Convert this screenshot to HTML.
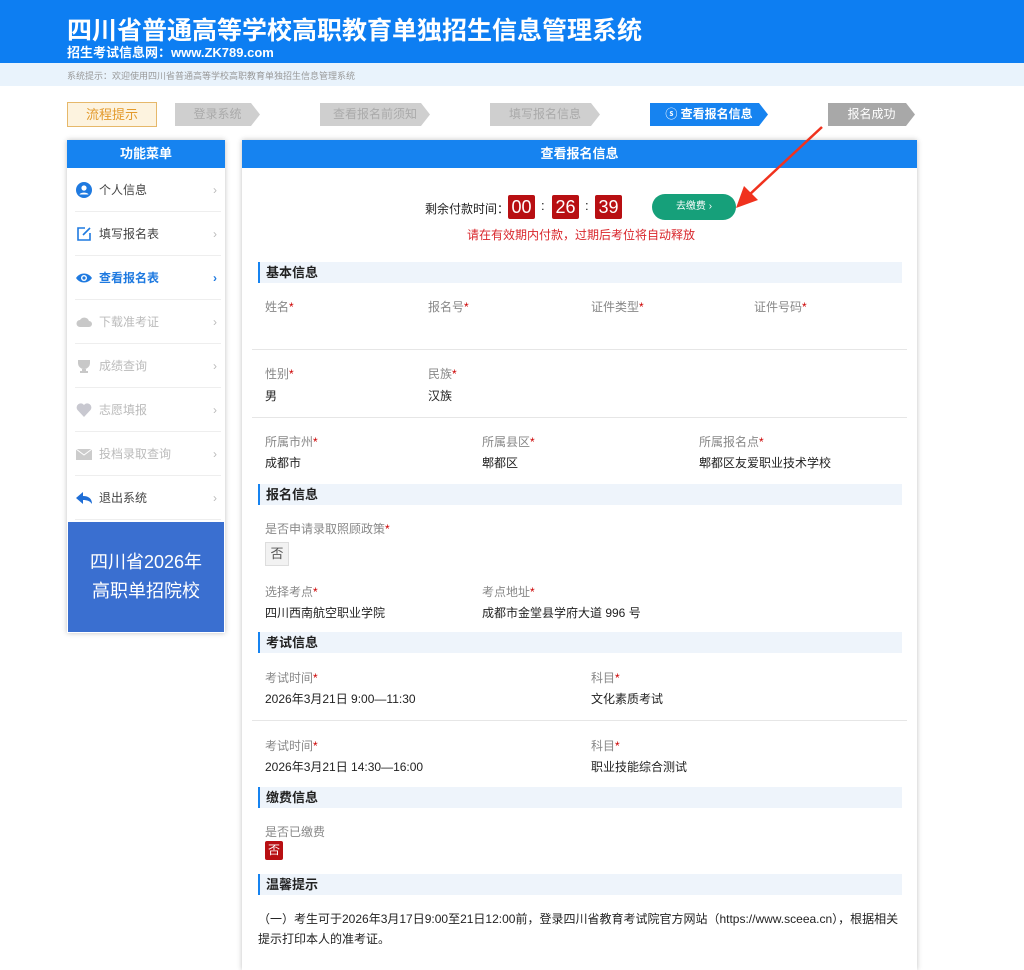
<!DOCTYPE html>
<html><head><meta charset="utf-8"><style>
*{margin:0;padding:0;box-sizing:border-box}
body{width:1024px;height:960px;overflow:hidden;background:#fff;font-family:"Liberation Sans","Noto Sans CJK SC",sans-serif;color:#222;position:relative}
.a{position:absolute;white-space:nowrap}
.hdr{left:0;top:0;width:1024px;height:63px;background:#0d7ef2}
.band{left:0;top:63px;width:1024px;height:23px;background:#e9f3fc}
.step{height:23px;top:103px;font-size:12px;color:#aaa;line-height:23px;text-align:center;background:#cfcfcf;clip-path:polygon(0 0,calc(100% - 9px) 0,100% 50%,calc(100% - 9px) 100%,0 100%)}
.side{left:67px;top:140px;width:158px;height:493px;background:#fff;box-shadow:0 0 5px rgba(0,0,0,.25)}
.item{position:absolute;left:8px;width:146px;height:44px;border-bottom:1px solid #eee;font-size:12px;line-height:44px;padding-left:24px;color:#444}
.item .ic{position:absolute;left:1px;top:14px;width:16px;height:16px}
.item .ar{position:absolute;right:4px;top:0;color:#bbb;font-size:12px}
.main{left:242px;top:140px;width:675px;height:830px;background:#fff;box-shadow:0 0 5px rgba(0,0,0,.25)}
.bh{height:28px;background:#1683f0;color:#fff;font-weight:bold;font-size:13px;text-align:center;line-height:28px}
.sec{left:16px;width:644px;height:21px;background:#eef4fb;border-left:2px solid #1683f0;font-size:13px;font-weight:bold;line-height:21px;padding-left:6px}
.lb{font-size:12px;color:#888}
.lb i{color:#c00;font-style:normal}
.v{font-size:12px;color:#222}
.sep{left:10px;width:655px;height:1px;background:#e6e6e6}
.tm{width:27px;height:24px;background:#b80f12;color:#fff;font-size:18px;line-height:24px;text-align:center;border-radius:2px}
</style></head><body>
<div class="a hdr"></div>
<div class="a" style="left:67px;top:11px;font-size:25px;font-weight:bold;color:#fff">四川省普通高等学校高职教育单独招生信息管理系统</div>
<div class="a" style="left:67px;top:42px;font-size:13px;font-weight:bold;color:#fff">招生考试信息网：www.ZK789.com</div>
<div class="a band"></div>
<div class="a" style="left:67px;top:69px;font-size:9px;color:#999">系统提示：欢迎使用四川省普通高等学校高职教育单独招生信息管理系统</div>

<div class="a" style="left:67px;top:102px;width:90px;height:25px;background:#fdf3df;border:1px solid #e6b86a;color:#e39a2c;font-size:13px;line-height:23px;text-align:center">流程提示</div>
<div class="a step" style="left:175px;width:85px">登录系统</div>
<div class="a step" style="left:320px;width:110px">查看报名前须知</div>
<div class="a step" style="left:490px;width:110px">填写报名信息</div>
<div class="a step" style="left:650px;width:118px;background:#1683f0;color:#fff;font-weight:bold">ⓢ 查看报名信息</div>
<div class="a step" style="left:828px;width:87px;background:#a8a8a8;color:#fff">报名成功</div>

<div class="a side">
<div class="bh" style="background:#1683f0">功能菜单</div>
<div class="item" style="top:28px"><svg class="ic" viewBox="0 0 16 16"><circle cx="8" cy="8" r="8" fill="#1f7ae0"/><circle cx="8" cy="6" r="2.6" fill="#fff"/><path d="M3.5 12.5c1-2.5 8-2.5 9 0" fill="#fff"/></svg>个人信息<span class="ar">›</span></div>
<div class="item" style="top:72px"><svg class="ic" viewBox="0 0 16 16"><path d="M9 2H2v12h12V7" fill="none" stroke="#1f7ae0" stroke-width="1.6"/><path d="M7 9l7-7" stroke="#1f7ae0" stroke-width="1.6"/></svg>填写报名表<span class="ar">›</span></div>
<div class="item" style="top:116px;color:#1f7ae0;font-weight:bold"><svg class="ic" viewBox="0 0 16 16"><path d="M0 8c4-6 12-6 16 0c-4 6-12 6-16 0z" fill="#1f7ae0"/><circle cx="8" cy="8" r="3" fill="#fff"/><circle cx="8" cy="8" r="1.6" fill="#1f7ae0"/></svg>查看报名表<span class="ar" style="color:#1f7ae0">›</span></div>
<div class="item" style="top:160px;color:#bbb"><svg class="ic" viewBox="0 0 16 16"><path d="M4 13a3.5 3.5 0 010-7a5 5 0 019 1a3 3 0 010 6z" fill="#c8c8c8"/></svg>下载准考证<span class="ar">›</span></div>
<div class="item" style="top:204px;color:#bbb"><svg class="ic" viewBox="0 0 16 16"><path d="M2 2h12v3a6 6 0 01-12 0z M6 11h4v2h2v2H4v-2h2z" fill="#c8c8c8"/></svg>成绩查询<span class="ar">›</span></div>
<div class="item" style="top:248px;color:#bbb"><svg class="ic" viewBox="0 0 16 16"><path d="M8 15L1.5 8A3.8 3.8 0 018 3a3.8 3.8 0 016.5 5z" fill="#c8c8d0"/></svg>志愿填报<span class="ar">›</span></div>
<div class="item" style="top:292px;color:#bbb"><svg class="ic" viewBox="0 0 16 16"><rect x="0" y="3" width="16" height="11" fill="#ccc"/><path d="M0 3l8 6 8-6" stroke="#fff" fill="none"/></svg>投档录取查询<span class="ar">›</span></div>
<div class="item" style="top:336px"><svg class="ic" viewBox="0 0 16 16"><path d="M7 2L0 8l7 6V10c4 0 7 1 9 4c0-5-3-8-9-8z" fill="#1f6ed6"/></svg>退出系统<span class="ar">›</span></div>
<div style="position:absolute;left:1px;top:382px;width:156px;height:110px;background:#3a6fd0;color:#fff;font-size:18px;text-align:center;line-height:29px;padding-top:26px">四川省2026年<br>高职单招院校</div>
</div>

<div class="a main">
<div class="bh">查看报名信息</div>
<div class="a" style="left:183px;top:60px;font-size:12px">剩余付款时间：</div>
<div class="a tm" style="left:266px;top:55px">00</div>
<div class="a" style="left:299px;top:58px;font-size:13px">:</div>
<div class="a tm" style="left:310px;top:55px">26</div>
<div class="a" style="left:343px;top:58px;font-size:13px">:</div>
<div class="a tm" style="left:353px;top:55px">39</div>
<div class="a" style="left:410px;top:54px;width:84px;height:26px;border-radius:13px;background:#16a07a;color:#fff;font-size:10px;line-height:26px;text-align:center">去缴费 ›</div>
<div class="a" style="left:225px;top:86px;font-size:12px;color:#d9262c">请在有效期内付款，过期后考位将自动释放</div>

<div class="a sec" style="top:122px">基本信息</div>
<div class="a lb" style="left:23px;top:158px">姓名<i>*</i></div>
<div class="a lb" style="left:186px;top:158px">报名号<i>*</i></div>
<div class="a lb" style="left:349px;top:158px">证件类型<i>*</i></div>
<div class="a lb" style="left:512px;top:158px">证件号码<i>*</i></div>
<div class="a sep" style="top:209px"></div>
<div class="a lb" style="left:23px;top:225px">性别<i>*</i></div>
<div class="a lb" style="left:186px;top:225px">民族<i>*</i></div>
<div class="a v" style="left:23px;top:247px">男</div>
<div class="a v" style="left:186px;top:247px">汉族</div>
<div class="a sep" style="top:277px"></div>
<div class="a lb" style="left:23px;top:293px">所属市州<i>*</i></div>
<div class="a lb" style="left:240px;top:293px">所属县区<i>*</i></div>
<div class="a lb" style="left:457px;top:293px">所属报名点<i>*</i></div>
<div class="a v" style="left:23px;top:314px">成都市</div>
<div class="a v" style="left:240px;top:314px">郫都区</div>
<div class="a v" style="left:457px;top:314px">郫都区友爱职业技术学校</div>

<div class="a sec" style="top:344px">报名信息</div>
<div class="a lb" style="left:23px;top:380px">是否申请录取照顾政策<i>*</i></div>
<div class="a" style="left:23px;top:402px;width:24px;height:24px;background:#f2f2f2;border:1px solid #ddd;font-size:13px;color:#555;text-align:center;line-height:22px">否</div>
<div class="a lb" style="left:23px;top:443px">选择考点<i>*</i></div>
<div class="a lb" style="left:240px;top:443px">考点地址<i>*</i></div>
<div class="a v" style="left:23px;top:464px">四川西南航空职业学院</div>
<div class="a v" style="left:240px;top:464px">成都市金堂县学府大道 996 号</div>

<div class="a sec" style="top:492px">考试信息</div>
<div class="a lb" style="left:23px;top:529px">考试时间<i>*</i></div>
<div class="a lb" style="left:349px;top:529px">科目<i>*</i></div>
<div class="a v" style="left:23px;top:550px">2026年3月21日 9:00—11:30</div>
<div class="a v" style="left:349px;top:550px">文化素质考试</div>
<div class="a sep" style="top:580px"></div>
<div class="a lb" style="left:23px;top:597px">考试时间<i>*</i></div>
<div class="a lb" style="left:349px;top:597px">科目<i>*</i></div>
<div class="a v" style="left:23px;top:618px">2026年3月21日 14:30—16:00</div>
<div class="a v" style="left:349px;top:618px">职业技能综合测试</div>

<div class="a sec" style="top:647px">缴费信息</div>
<div class="a lb" style="left:23px;top:683px">是否已缴费</div>
<div class="a" style="left:23px;top:701px;width:18px;height:19px;background:#b80f12;color:#fff;font-size:12px;text-align:center;line-height:19px;border-radius:2px">否</div>

<div class="a sec" style="top:734px">温馨提示</div>
<div class="a v" style="left:16px;top:769px;line-height:20px;white-space:normal;width:645px">（一）考生可于2026年3月17日9:00至21日12:00前，登录四川省教育考试院官方网站（https://www.sceea.cn），根据相关提示打印本人的准考证。</div>
</div>

<svg class="a" style="left:0;top:0" width="1024" height="960"><path d="M822 127L748 196" stroke="#f0321e" stroke-width="2.5"/><path d="M736 208L744 186L758 200z" fill="#f0321e"/></svg>
</body></html>
